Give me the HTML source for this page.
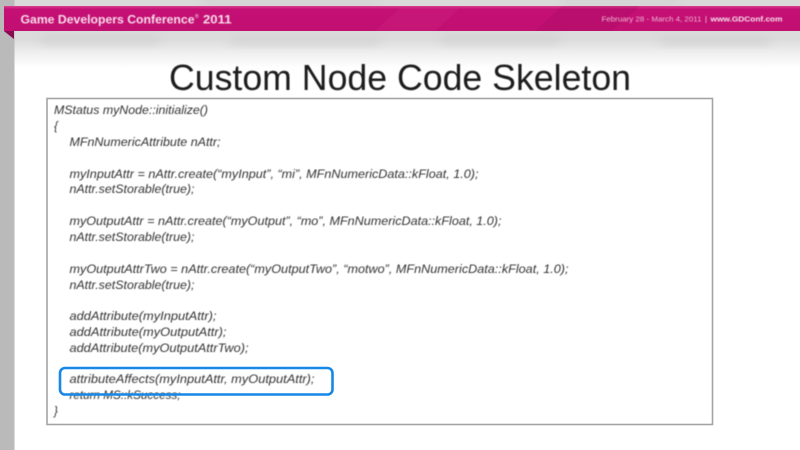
<!DOCTYPE html>
<html><head><meta charset="utf-8"><style>
html,body{margin:0;padding:0;background:#fff;width:800px;height:450px;overflow:hidden}
svg{display:block}
.c{font-family:"Liberation Sans",sans-serif;font-style:italic;font-size:11.5px;fill:#333}
</style></head><body>
<svg width="800" height="450" viewBox="0 0 800 450" xmlns="http://www.w3.org/2000/svg">
<defs>
<linearGradient id="fade" x1="0" y1="0" x2="0" y2="1">
<stop offset="0" stop-color="#dadada"/><stop offset=".58" stop-color="#dcdcdc"/><stop offset=".78" stop-color="#efefef"/><stop offset="1" stop-color="#fff"/>
</linearGradient>
<linearGradient id="band" x1="0" y1="0" x2="0" y2="1">
<stop offset="0" stop-color="#d9408f"/><stop offset=".1" stop-color="#c40f74"/><stop offset=".75" stop-color="#c20f72"/><stop offset="1" stop-color="#ad0c65"/>
</linearGradient>
<filter id="b1"><feGaussianBlur stdDeviation=".5"/></filter>
<filter id="b2"><feGaussianBlur stdDeviation=".4"/></filter>
<filter id="b3"><feGaussianBlur stdDeviation=".25"/></filter>
<filter id="b5"><feGaussianBlur stdDeviation="5"/></filter>
</defs>
<rect width="800" height="450" fill="#fff"/>
<rect x="14" width="786" height="68" fill="url(#fade)"/>
<g filter="url(#b5)" fill="#c6c6c6" opacity=".5">
<rect x="40" y="36" width="120" height="8"/><rect x="230" y="38" width="150" height="7"/>
<rect x="440" y="36" width="120" height="8"/><rect x="660" y="37" width="110" height="8"/>
<rect x="200" y="0" width="180" height="5"/><rect x="560" y="0" width="120" height="5"/>
</g>
<rect x="0" y="0" width="14.5" height="450" fill="#b9bab9"/>
<path d="M4 6H800V31H14V39L4 31Z" fill="url(#band)"/>
<path d="M4 31H14V39Z" fill="#8a0b52"/>
<path d="M375 31L402 6H462L435 31Z" fill="#cf2a85" opacity=".25"/>
<path d="M535 31L562 6H640L612 31H535Z" fill="#8f0a55" opacity=".18"/>
<g filter="url(#b1)">
<text x="20.5" y="23.5" font-family="'Liberation Sans',sans-serif" font-weight="700" font-size="11.5" fill="#f8dcea" textLength="174" lengthAdjust="spacingAndGlyphs">Game Developers Conference</text>
<text x="195" y="18" font-family="'Liberation Sans',sans-serif" font-size="5" fill="#f8dcea">®</text>
<text x="203" y="23.5" font-family="'Liberation Sans',sans-serif" font-weight="700" font-size="11.5" fill="#f8dcea" textLength="28.5" lengthAdjust="spacingAndGlyphs">2011</text>
<text x="601.5" y="21.5" font-family="'Liberation Sans',sans-serif" font-size="7.4" fill="#eeb4d3" textLength="100" lengthAdjust="spacingAndGlyphs">February 28 - March 4, 2011</text>
<text x="705" y="21.5" font-family="'Liberation Sans',sans-serif" font-size="7.4" fill="#f6d8e8">|</text>
<text x="710.5" y="21.5" font-family="'Liberation Sans',sans-serif" font-weight="700" font-size="7.4" fill="#f6e0ec" textLength="72" lengthAdjust="spacingAndGlyphs">www.GDConf.com</text>
</g>
<text x="169" y="90" font-family="'Liberation Sans',sans-serif" font-size="36" fill="#1a1a1a" textLength="462" lengthAdjust="spacingAndGlyphs" filter="url(#b2)">Custom Node Code Skeleton</text>
<rect x="47" y="98.5" width="665.5" height="326" fill="#fff" stroke="#a4a4a4" stroke-width="1.6"/>
<g filter="url(#b2)">
<text class="c" x="54" y="114" textLength="154" lengthAdjust="spacingAndGlyphs">MStatus myNode::initialize()</text>
<text class="c" x="54" y="130">{</text>
<text class="c" x="69.5" y="146" textLength="151" lengthAdjust="spacingAndGlyphs">MFnNumericAttribute nAttr;</text>
<text class="c" x="69.5" y="178" textLength="409" lengthAdjust="spacingAndGlyphs">myInputAttr = nAttr.create(“myInput”, “mi”, MFnNumericData::kFloat, 1.0);</text>
<text class="c" x="69.5" y="193" textLength="125" lengthAdjust="spacingAndGlyphs">nAttr.setStorable(true);</text>
<text class="c" x="69.5" y="225" textLength="432" lengthAdjust="spacingAndGlyphs">myOutputAttr = nAttr.create(“myOutput”, “mo”, MFnNumericData::kFloat, 1.0);</text>
<text class="c" x="69.5" y="241" textLength="125" lengthAdjust="spacingAndGlyphs">nAttr.setStorable(true);</text>
<text class="c" x="69.5" y="273" textLength="499" lengthAdjust="spacingAndGlyphs">myOutputAttrTwo = nAttr.create(“myOutputTwo”, “motwo”, MFnNumericData::kFloat, 1.0);</text>
<text class="c" x="69.5" y="289" textLength="125" lengthAdjust="spacingAndGlyphs">nAttr.setStorable(true);</text>
<text class="c" x="69.5" y="320" textLength="147" lengthAdjust="spacingAndGlyphs">addAttribute(myInputAttr);</text>
<text class="c" x="69.5" y="336" textLength="157" lengthAdjust="spacingAndGlyphs">addAttribute(myOutputAttr);</text>
<text class="c" x="69.5" y="352" textLength="179" lengthAdjust="spacingAndGlyphs">addAttribute(myOutputAttrTwo);</text>
<text class="c" x="69.5" y="383" textLength="245" lengthAdjust="spacingAndGlyphs">attributeAffects(myInputAttr, myOutputAttr);</text>
<text class="c" x="69.5" y="399" textLength="111" lengthAdjust="spacingAndGlyphs">return MS::kSuccess;</text>
<text class="c" x="54" y="415">}</text>
</g>
<rect x="60" y="368" width="272.5" height="26.5" rx="5" fill="none" stroke="#1488e8" stroke-width="2.6" filter="url(#b3)"/>
</svg>
</body></html>
